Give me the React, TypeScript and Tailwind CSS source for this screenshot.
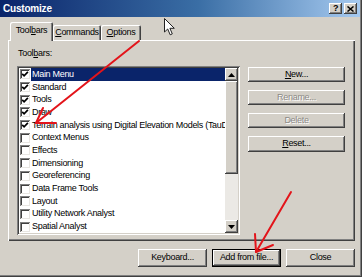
import React from "react";

const raised =
  "bg-[#d4d0c8] shadow-[inset_-1px_-1px_#404040,inset_1px_1px_#ffffff,inset_-2px_-2px_#808080,inset_2px_2px_#d4d0c8]";
const sunkenBox =
  "shadow-[inset_1px_1px_#808080,inset_-1px_-1px_#ffffff]";

const items: { label: string; checked: boolean; selected?: boolean }[] = [
  { label: "Main Menu", checked: true, selected: true },
  { label: "Standard", checked: true },
  { label: "Tools", checked: true },
  { label: "Draw", checked: true },
  { label: "Terrain analysis using Digital Elevation Models (TauDEM)", checked: true },
  { label: "Context Menus", checked: false },
  { label: "Effects", checked: false },
  { label: "Dimensioning", checked: false },
  { label: "Georeferencing", checked: false },
  { label: "Data Frame Tools", checked: false },
  { label: "Layout", checked: false },
  { label: "Utility Network Analyst", checked: false },
  { label: "Spatial Analyst", checked: false },
];

function Checkbox({ checked }: { checked: boolean }) {
  return (
    <div
      className={`w-[10px] h-[10px] shrink-0 bg-white flex items-center justify-center shadow-[inset_1px_1px_#808080,inset_-1px_-1px_#e8e6e2,inset_2px_2px_#404040]`}
    >
      {checked && (
        <svg width="8" height="8" viewBox="0 0 8 8">
          <path d="M1.2 3.8 L3.1 5.8 L6.9 1.8" stroke="#000" strokeWidth="1.7" fill="none" />
        </svg>
      )}
    </div>
  );
}

function Arrow({ down }: { down?: boolean }) {
  return (
    <svg width="7" height="4" viewBox="0 0 7 4">
      {down ? <path d="M0 0 H7 L3.5 4 Z" fill="#000" /> : <path d="M0 4 H7 L3.5 0 Z" fill="#000" />}
    </svg>
  );
}

function Btn({
  children,
  disabled,
  isDefault,
  className = "",
}: {
  children: React.ReactNode;
  disabled?: boolean;
  isDefault?: boolean;
  className?: string;
}) {
  return (
    <div
      className={`${
        isDefault
          ? "bg-[#d4d0c8] shadow-[inset_0_0_0_1px_#000000,inset_-2px_-2px_#404040,inset_2px_2px_#ffffff,inset_-3px_-3px_#808080]"
          : raised
      } flex items-center justify-center ${
        disabled ? "text-[#8c8a86] [text-shadow:1px_1px_0_#ffffff]" : "text-black"
      } ${className}`}
    >
      {children}
    </div>
  );
}

export default function App() {
  return (
    <div className="relative w-[362px] h-[277px] overflow-hidden bg-[#d4d0c8] font-['Liberation_Sans',Arial,sans-serif] text-[9px] tracking-[-0.3px] text-black shadow-[inset_-1px_-1px_#404040,inset_-2px_-2px_#808080]">
      {/* Title bar */}
      <div className="h-[17px] mr-[2px] flex items-center justify-between pl-[3px] pr-[3px] bg-[linear-gradient(to_right,#0a246a,#3a6ea5_55%,#a6caf0)]">
        <span className="text-white font-bold text-[10px] tracking-[-0.2px] leading-none">Customize</span>
        <div className="flex gap-[2px]">
          <div className={`${raised} w-[13px] h-[11px] flex items-center justify-center text-[9px] font-bold leading-none`}>?</div>
          <div className={`${raised} w-[13px] h-[11px] flex items-center justify-center`}>
            <svg width="7" height="6" viewBox="0 0 7 6">
              <path d="M0.5 0.5 L6.5 5.5 M6.5 0.5 L0.5 5.5" stroke="#000" strokeWidth="1.5" />
            </svg>
          </div>
        </div>
      </div>

      {/* Body */}
      <div className="pl-[8px] pr-[7px] pt-[5px]">
        {/* Tabs */}
        <div className="relative z-10 flex items-end h-[19px] -mb-px pl-[2px]">
          <div className="w-[43px] h-[19px] bg-[#d4d0c8] rounded-t-[2px] shadow-[inset_1px_1px_#ffffff,inset_-1px_0_#404040,inset_-2px_0_#808080] flex items-center justify-center pb-[2px]">
            <span>
              Tool<span className="underline">b</span>ars
            </span>
          </div>
          <div className="w-[48px] h-[15px] mb-px rounded-t-[2px] shadow-[inset_1px_1px_#ffffff,inset_-1px_0_#404040,inset_-2px_0_#808080] flex items-center justify-center">
            <span>
              <span className="underline">C</span>ommands
            </span>
          </div>
          <div className="w-[40px] h-[15px] mb-px rounded-t-[2px] shadow-[inset_1px_1px_#ffffff,inset_-1px_0_#404040,inset_-2px_0_#808080] flex items-center justify-center">
            <span>
              <span className="underline">O</span>ptions
            </span>
          </div>
        </div>

        {/* Panel */}
        <div className="h-[201px] shadow-[inset_1px_1px_#ffffff,inset_-1px_-1px_#404040,inset_-2px_-2px_#808080] flex pl-[9px] pr-[7px]">
          <div className="flex flex-col w-[223px]">
            <div className="mt-[7px] h-[12px] leading-[12px] pl-[1px]">
              Tool<span className="underline">b</span>ars:
            </div>
            <div className="mt-[7px] h-[169px] p-[2px] bg-white shadow-[inset_1px_1px_#808080,inset_-1px_-1px_#ffffff,inset_2px_2px_#404040,inset_-2px_-2px_#d4d0c8] flex">
              <div className="flex-1 min-w-0 flex flex-col overflow-hidden">
                {items.map((it) => (
                  <div key={it.label} className="h-[12.7px] flex items-center whitespace-nowrap pl-[1px]">
                    <Checkbox checked={it.checked} />
                    <div
                      className={`ml-[1px] h-full flex-1 flex items-center pl-[1px] leading-none ${
                        it.selected ? "bg-[#0a246a] text-white" : ""
                      }`}
                    >
                      {it.label}
                    </div>
                  </div>
                ))}
              </div>
              {/* Scrollbar */}
              <div className="w-[13px] flex flex-col">
                <div className={`${raised} h-[13px] flex items-center justify-center`}>
                  <Arrow />
                </div>
                <div className={`${raised} h-[93px]`} />
                <div className="flex-1 bg-[#ebe9e5]" />
                <div className={`${raised} h-[13px] flex items-center justify-center`}>
                  <Arrow down />
                </div>
              </div>
            </div>
          </div>

          <div className="ml-[8px] mt-[27px] flex flex-col gap-[8px] w-[97px]">
            <Btn className="h-[15px]">
              <span>
                <span className="underline">N</span>ew...
              </span>
            </Btn>
            <Btn className="h-[15px]" disabled>
              Rename...
            </Btn>
            <Btn className="h-[15px]" disabled>
              Delete
            </Btn>
            <Btn className="h-[16px]">
              <span>
                <span className="underline">R</span>eset...
              </span>
            </Btn>
          </div>
        </div>

        {/* Bottom buttons */}
        <div className="mt-[8px] flex justify-end gap-[5px]">
          <Btn className="w-[69px] h-[18px]">Keyboard...</Btn>
          <Btn className="w-[69px] h-[18px]" isDefault>
            Add from file...
          </Btn>
          <Btn className="w-[69px] h-[18px]">Close</Btn>
        </div>
      </div>

      {/* Mouse cursor */}
      <svg className="absolute left-[164px] top-[18px] pointer-events-none" width="12" height="18" viewBox="0 0 12 18">
        <path d="M0.5 0.5 L0.5 14 L3.7 11 L6.2 16.8 L8.3 15.9 L5.9 10.3 L10.3 10.3 Z" fill="#ffffff" stroke="#222" strokeWidth="1" />
      </svg>

      {/* Red annotation arrows */}
      <svg className="absolute inset-0 pointer-events-none" width="362" height="277" viewBox="0 0 362 277">
        <g stroke="#e3141a" strokeWidth="2" fill="none" strokeLinecap="round" strokeLinejoin="round">
          <path d="M139 41 L36 123" />
          <path d="M43 108 L36 123 L56 123" />
          <path d="M291 192 L256 252" />
          <path d="M255 234 L256 252 L273 245" />
        </g>
      </svg>
    </div>
  );
}
